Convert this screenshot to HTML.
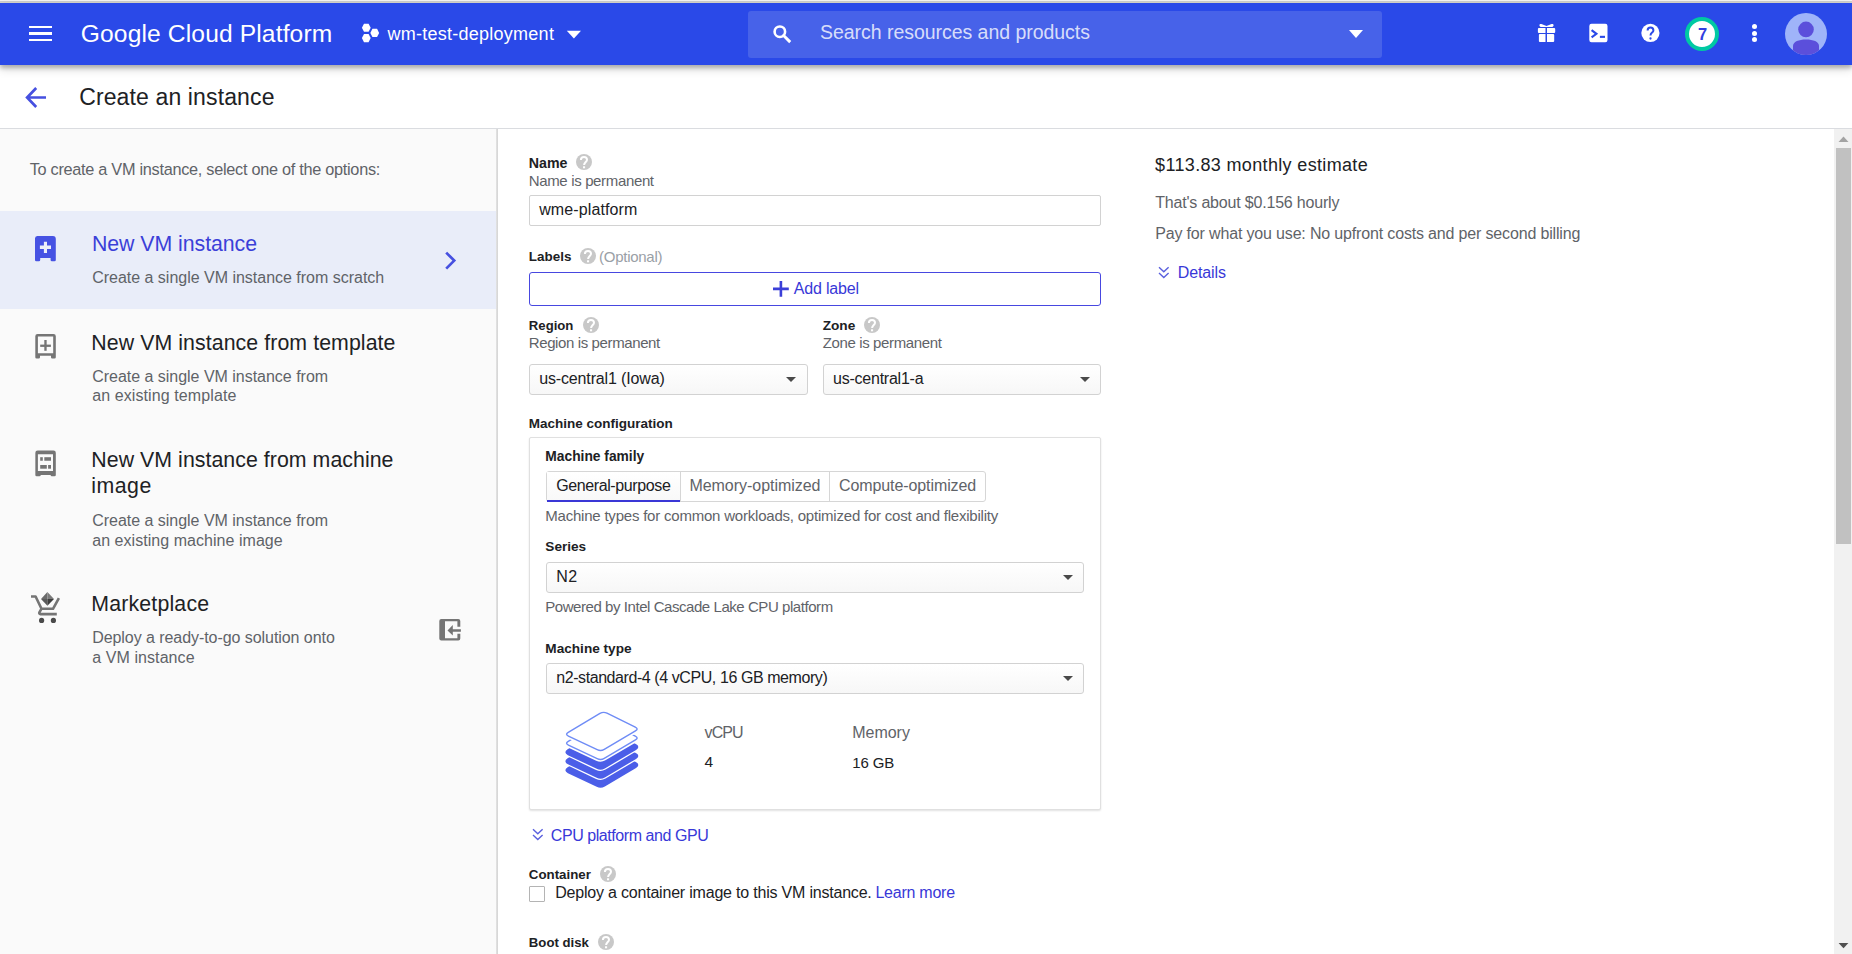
<!DOCTYPE html>
<html><head><meta charset="utf-8"><title>Create an instance</title>
<style>
html,body{margin:0;padding:0;width:1852px;height:954px;overflow:hidden;background:#fff;font-family:"Liberation Sans", sans-serif;}
.t{position:absolute;white-space:nowrap;line-height:normal;}
.a{position:absolute;box-sizing:border-box;}
</style></head><body>
<!-- top strip -->
<div class=a style="left:0;top:0;width:1852px;height:1px;background:#f4f3f0"></div><div class=a style="left:0;top:1px;width:1852px;height:1px;background:#cdcdcd"></div><div class=a style="left:0;top:2px;width:1852px;height:1px;background:#d8d6cc"></div>
<!-- header -->
<div class=a style="left:0;top:3px;width:1852px;height:62px;background:#2a49e8;box-shadow:0 3px 4px rgba(0,0,0,0.22),0 4px 9px rgba(0,0,0,0.17)"></div>
<!-- hamburger -->
<div class=a style="left:29px;top:25.8px;width:23.3px;height:2.5px;background:#fff"></div>
<div class=a style="left:29px;top:32.3px;width:23.3px;height:2.5px;background:#fff"></div>
<div class=a style="left:29px;top:38.7px;width:23.3px;height:2.5px;background:#fff"></div>
<!-- project icon -->
<svg class=a style="left:355px;top:18px" width="30" height="30" viewBox="355 18 30 30"><polygon fill="#fff" points="361.90,27.75 364.00,23.65 368.60,23.65 370.70,27.75 368.60,31.85 364.00,31.85"/><polygon fill="#fff" points="370.35,32.90 372.45,28.80 377.05,28.80 379.15,32.90 377.05,37.00 372.45,37.00"/><polygon fill="#fff" points="361.90,38.10 364.00,34.00 368.60,34.00 370.70,38.10 368.60,42.20 364.00,42.20"/></svg>
<!-- dropdown arrow -->
<svg class=a style="left:566px;top:30px" width="16" height="9" viewBox="0 0 16 9"><polygon fill="#fff" points="0.8,0.7 15,0.7 7.9,8.4"/></svg>
<!-- search box -->
<div class=a style="left:748px;top:11px;width:634px;height:47px;background:#4762e9;border-radius:3px"></div>
<svg class=a style="left:765px;top:20px" width="35" height="30" viewBox="765 20 35 30"><circle cx="779.85" cy="31.7" r="5.25" fill="none" stroke="#fff" stroke-width="2.6"/><path d="M783.6 35.6l5.6 5.5" stroke="#fff" stroke-width="2.9" stroke-linecap="square"/></svg>
<svg class=a style="left:1348px;top:29px" width="16" height="10" viewBox="0 0 16 10"><polygon fill="#fff" points="1,1 15,1 8,9"/></svg>
<!-- header right icons -->
<svg class=a style="left:1530px;top:15px" width="140" height="35" viewBox="1530 15 140 35">
  <path fill="#fff" d="M1539.4 25.3c0-1.2 1-1.6 2-1.3l5.1 1.9 5.1-1.9c1-.3 2 .1 2 1.3 0 1.2-.9 1.8-2 1.8h-10.2c-1.1 0-2-.6-2-1.8z"/>
  <rect fill="#fff" x="1537.9" y="28" width="17.3" height="5" rx="1"/>
  <rect fill="#fff" x="1538.9" y="33.9" width="15.3" height="8.1" rx="1"/>
  <rect fill="#2a49e8" x="1545.5" y="27.5" width="1.5" height="15"/>
  <rect fill="#fff" x="1589.3" y="23.7" width="18.2" height="18.5" rx="2.2"/>
  <path fill="none" stroke="#2a49e8" stroke-width="2.1" stroke-linejoin="miter" d="M1591.6 30.2l4.8 3.6-4.8 3.6"/>
  <rect fill="#2a49e8" x="1599.9" y="35.8" width="5.1" height="2.1"/>
  <circle fill="#fff" cx="1650.4" cy="32.95" r="9.1"/>
  <path fill="none" stroke="#2a49e8" stroke-width="2" d="M1647.6 30.6c0-1.8 1.2-3 2.9-3s2.9 1.2 2.9 2.8c0 2.1-2.9 2.4-2.9 5"/>
  <circle fill="#2a49e8" cx="1650.5" cy="38.5" r="1.15"/>
</svg>
<div class=a style="left:1685px;top:17px;width:34px;height:34px;border-radius:50%;background:#fff;border:4.9px solid #00c9a3"></div>
<div class=t style="left:1693px;top:25.2px;font-size:16.5px;font-weight:700;color:#3140e0;width:19px;text-align:center">7</div>
<div class=a style="left:1751.7px;top:23.8px;width:5.3px;height:5.3px;border-radius:50%;background:#fff"></div>
<div class=a style="left:1751.7px;top:30.5px;width:5.3px;height:5.3px;border-radius:50%;background:#fff"></div>
<div class=a style="left:1751.7px;top:37.2px;width:5.3px;height:5.3px;border-radius:50%;background:#fff"></div>
<svg class=a style="left:1785px;top:13px" width="42" height="42" viewBox="1785 13 42 42">
  <defs><clipPath id="avc"><circle cx="1806" cy="34" r="21"/></clipPath></defs>
  <circle cx="1806" cy="34" r="21" fill="#9fb4f9"/>
  <g clip-path="url(#avc)">
  <circle cx="1806" cy="29.4" r="7.8" fill="#5b4fdb"/>
  <path fill="#5b4fdb" d="M1793 55V46c0-4.5 5.8-6.6 13-6.6s13 2.1 13 6.6V55z"/>
  </g>
</svg>
<!-- secondary header -->
<svg class=a style="left:15px;top:78px" width="45" height="40" viewBox="15 78 45 40"><path fill="none" stroke="#4650e0" stroke-width="2.7" stroke-linejoin="miter" stroke-miterlimit="10" d="M46 97.5H28M36.2 88 27.1 97.5 36.2 107"/></svg>
<div class=a style="left:0;top:128px;width:1852px;height:1px;background:#dadce0"></div>
<!-- left panel -->
<div class=a style="left:0;top:129px;width:497px;height:825px;background:#fafafa"></div>
<div class=a style="left:0;top:211px;width:497px;height:98px;background:#e9edf9"></div>
<div class=a style="left:496px;top:129px;width:2px;height:825px;background:linear-gradient(to right,#e4e4e4,#d3d3d3)"></div>
<!-- scrollbar -->
<div class=a style="left:1834px;top:129px;width:18px;height:825px;background:#f1f1f1"></div>
<div class=a style="left:1836px;top:148px;width:15px;height:396px;background:#c1c1c1"></div>
<svg class=a style="left:1838px;top:136px" width="11" height="7" viewBox="0 0 11 7"><polygon fill="#a3a3a3" points="0.5,6 10.5,6 5.5,0.6"/></svg>
<svg class=a style="left:1838px;top:942px" width="11" height="7" viewBox="0 0 11 7"><polygon fill="#505050" points="0.6,1 10.4,1 5.5,6.2"/></svg>
<!-- left icons -->
<svg class=a style="left:34px;top:235px" width="24" height="27" viewBox="0 0 24 27"><path fill="#4652e3" d="M3.3 1h15.6a2.9 2.9 0 0 1 2.9 2.9V25a1.3 1.3 0 0 1-1.3 1.3h-2.6a1.3 1.3 0 0 1-1.3-1.3v-2H6.2v2a1.3 1.3 0 0 1-1.3 1.3H2.3A1.3 1.3 0 0 1 1 25V3.6A2.6 2.6 0 0 1 3.3 1z"/><path fill="#eef0f8" d="M9.9 6.8h3.1v3.8h4v3.4h-4v3.9H9.9v-3.9H5.9v-3.4h4z"/></svg>
<svg class=a style="left:30px;top:330px" width="30" height="32" viewBox="30 330 30 32"><path fill="#757575" fill-rule="evenodd" d="M37.6 334h15.9a2.3 2.3 0 0 1 2.3 2.3V357.2a1.3 1.3 0 0 1-1.3 1.3h-2.3a1.3 1.3 0 0 1-1.2-1.3v-1.5H40v1.5a1.3 1.3 0 0 1-1.3 1.3h-2.1a1.3 1.3 0 0 1-1.3-1.3V336.3a2.3 2.3 0 0 1 2.3-2.3zM37.9 336.6v16.7h15.3v-16.7z"/><rect fill="#757575" x="40.2" y="344.6" width="10.7" height="2.3"/><rect fill="#757575" x="44.3" y="340" width="2.35" height="10.8"/></svg>
<svg class=a style="left:30px;top:446px" width="30" height="34" viewBox="30 446 30 34"><path fill="#757575" fill-rule="evenodd" d="M37.6 450.4h15.9a2.3 2.3 0 0 1 2.3 2.3V475a1.3 1.3 0 0 1-1.3 1.3h-2.6a1.3 1.3 0 0 1-1.3-1.3v-.1H40.75v.1a1.3 1.3 0 0 1-1.3 1.3h-2.8a1.3 1.3 0 0 1-1.3-1.3V452.7a2.3 2.3 0 0 1 2.3-2.3zM37.9 454.2v16.9h15.1v-16.9z"/><rect fill="#757575" x="40.2" y="457.2" width="2.6" height="3.55"/><rect fill="#757575" x="44.3" y="457.2" width="6.7" height="3.55"/><rect fill="#757575" x="40.2" y="465" width="6.6" height="3.7"/><rect fill="#757575" x="48.1" y="465" width="2.9" height="3.7"/></svg>
<svg class=a style="left:30px;top:590px" width="32" height="34" viewBox="0 0 32 34"><path fill="none" stroke="#757575" stroke-width="2.6" stroke-linejoin="round" d="M1 6.5h4.6l5.9 12.3h11.5l5.9-10.6M11.4 18.8l-2 3.6c-.5 1 .1 1.7 1 1.7h16.4"/><circle cx="11.6" cy="30.4" r="2.6" fill="#4a4a4a"/><circle cx="23.4" cy="30.4" r="2.6" fill="#4a4a4a"/><polygon fill="#6a6a6a" points="17.4,2 11,9.1 17.4,9.1"/><polygon fill="#7a7a7a" points="17.4,2 24,9.1 17.4,9.1"/><polygon fill="#5a5a5a" points="11,9.1 17.4,15.7 17.4,9.1"/><polygon fill="#3e3e3e" points="24,9.1 17.4,15.7 17.4,9.1"/></svg>
<svg class=a style="left:438px;top:617px" width="24" height="26" viewBox="0 0 24 26"><path fill="#757575" d="M3.3 1.9h17a2 2 0 0 1 2 2v5.8h-2.9V4.2H7v17.1h12.4v-4.6h2.9v4.9a2 2 0 0 1-2 2h-17a2 2 0 0 1-2-2V3.9a2 2 0 0 1 2-2z"/><polygon fill="#757575" points="9.5,13.4 14.8,8.1 14.8,12.2 22.9,12.2 22.9,14.7 14.8,14.7 14.8,18.6"/></svg>
<svg class=a style="left:430px;top:240px" width="40" height="40" viewBox="430 240 40 40"><path fill="none" stroke="#4650e0" stroke-width="2.7" d="M446.2 252.6 454.2 260.6 446.2 268.6"/></svg>
<!-- form: Name -->
<svg class=a style="left:576.0px;top:154.0px" width="16" height="16" viewBox="-8 -8 16 16"><circle r="8" fill="#c8c8c8"/><path fill="none" stroke="#fff" stroke-width="2" d="M-3.1-1.9C-3.1-3.9-1.7-5.1 0-5.1 1.8-5.1 3-3.9 3-2.3 3-.3 .1.3 .1 3"/><rect fill="#fff" x="-1" y="4.3" width="2.1" height="2"/></svg>
<div class=a style="left:529px;top:195px;width:572px;height:31px;border:1px solid #d2d2d2;border-radius:2px;background:#fff"></div>
<svg class=a style="left:580.0px;top:248.0px" width="16" height="16" viewBox="-8 -8 16 16"><circle r="8" fill="#c8c8c8"/><path fill="none" stroke="#fff" stroke-width="2" d="M-3.1-1.9C-3.1-3.9-1.7-5.1 0-5.1 1.8-5.1 3-3.9 3-2.3 3-.3 .1.3 .1 3"/><rect fill="#fff" x="-1" y="4.3" width="2.1" height="2"/></svg>
<div class=a style="left:529px;top:272px;width:572px;height:34px;border:1.6px solid #4848e0;border-radius:3px"></div>
<svg class=a style="left:772px;top:280px" width="18" height="18" viewBox="0 0 18 18"><path fill="#3b3fd8" d="M7.6 1h2.6v6.6h6.6v2.6h-6.6v6.6H7.6v-6.6H1V7.6h6.6z"/></svg>
<svg class=a style="left:583.0px;top:317.0px" width="16" height="16" viewBox="-8 -8 16 16"><circle r="8" fill="#c8c8c8"/><path fill="none" stroke="#fff" stroke-width="2" d="M-3.1-1.9C-3.1-3.9-1.7-5.1 0-5.1 1.8-5.1 3-3.9 3-2.3 3-.3 .1.3 .1 3"/><rect fill="#fff" x="-1" y="4.3" width="2.1" height="2"/></svg>
<svg class=a style="left:864.0px;top:317.0px" width="16" height="16" viewBox="-8 -8 16 16"><circle r="8" fill="#c8c8c8"/><path fill="none" stroke="#fff" stroke-width="2" d="M-3.1-1.9C-3.1-3.9-1.7-5.1 0-5.1 1.8-5.1 3-3.9 3-2.3 3-.3 .1.3 .1 3"/><rect fill="#fff" x="-1" y="4.3" width="2.1" height="2"/></svg>
<div class=a style="left:529px;top:364px;width:279px;height:31px;border:1px solid #d2d2d2;border-radius:3px;background:linear-gradient(#fff,#f7f7f7)"></div>
<div class=a style="left:823px;top:364px;width:278px;height:31px;border:1px solid #d2d2d2;border-radius:3px;background:linear-gradient(#fff,#f7f7f7)"></div>
<svg class=a style="left:785px;top:376px" width="12" height="7" viewBox="0 0 12 7"><polygon fill="#4a4a4a" points="1,1 11,1 6,6"/></svg>
<svg class=a style="left:1079px;top:376px" width="12" height="7" viewBox="0 0 12 7"><polygon fill="#4a4a4a" points="1,1 11,1 6,6"/></svg>
<!-- machine config box -->
<div class=a style="left:529px;top:437px;width:572px;height:373px;border:1px solid #e0e0e0;border-radius:2px;background:#fff;box-shadow:0 1px 2px rgba(0,0,0,0.12)"></div>
<div class=a style="left:546px;top:471px;width:440px;height:31px;border:1px solid #d6d6d6;border-radius:3px;background:#fff"></div>
<div class=a style="left:547px;top:472px;width:133px;height:29px;background:linear-gradient(#fff,#f8f8f8)"></div>
<div class=a style="left:547px;top:499.6px;width:133px;height:2.4px;background:#3a37d6"></div>
<div class=a style="left:680px;top:471px;width:1px;height:31px;background:#d6d6d6"></div>
<div class=a style="left:829px;top:471px;width:1px;height:31px;background:#d6d6d6"></div>
<div class=a style="left:546px;top:562px;width:538px;height:31px;border:1px solid #d2d2d2;border-radius:3px;background:linear-gradient(#fff,#f7f7f7)"></div>
<svg class=a style="left:1062px;top:574px" width="12" height="7" viewBox="0 0 12 7"><polygon fill="#4a4a4a" points="1,1 11,1 6,6"/></svg>
<div class=a style="left:546px;top:663px;width:538px;height:31px;border:1px solid #d2d2d2;border-radius:3px;background:linear-gradient(#fff,#f7f7f7)"></div>
<svg class=a style="left:1062px;top:675px" width="12" height="7" viewBox="0 0 12 7"><polygon fill="#4a4a4a" points="1,1 11,1 6,6"/></svg>
<!-- stack icon -->
<svg class=a style="left:555px;top:700px" width="95" height="95" viewBox="555 700 95 95"><g stroke-linejoin="round"><path d="M599.96 749.45Q603.40 747.40 606.99 749.17L635.31 763.13Q638.90 764.90 635.46 766.93L604.24 785.37Q600.80 787.40 597.18 785.69L568.42 772.11Q564.80 770.40 568.24 768.35Z" fill="#fff" stroke="#fff" stroke-width="5"/><path d="M599.96 749.45Q603.40 747.40 606.99 749.17L635.31 763.13Q638.90 764.90 635.46 766.93L604.24 785.37Q600.80 787.40 597.18 785.69L568.42 772.11Q564.80 770.40 568.24 768.35Z" fill="#4b5ee8" stroke="#4b5ee8" stroke-width="2.4"/><path d="M599.96 740.45Q603.40 738.40 606.99 740.17L635.31 754.13Q638.90 755.90 635.46 757.93L604.24 776.37Q600.80 778.40 597.18 776.69L568.42 763.11Q564.80 761.40 568.24 759.35Z" fill="#fff" stroke="#fff" stroke-width="5"/><path d="M599.96 740.45Q603.40 738.40 606.99 740.17L635.31 754.13Q638.90 755.90 635.46 757.93L604.24 776.37Q600.80 778.40 597.18 776.69L568.42 763.11Q564.80 761.40 568.24 759.35Z" fill="#4b5ee8" stroke="#4b5ee8" stroke-width="2.4"/><path d="M599.96 731.45Q603.40 729.40 606.99 731.17L635.31 745.13Q638.90 746.90 635.46 748.93L604.24 767.37Q600.80 769.40 597.18 767.69L568.42 754.11Q564.80 752.40 568.24 750.35Z" fill="#fff" stroke="#fff" stroke-width="5"/><path d="M599.96 731.45Q603.40 729.40 606.99 731.17L635.31 745.13Q638.90 746.90 635.46 748.93L604.24 767.37Q600.80 769.40 597.18 767.69L568.42 754.11Q564.80 752.40 568.24 750.35Z" fill="#4b5ee8" stroke="#4b5ee8" stroke-width="2.4"/><path d="M599.96 722.45Q603.40 720.40 606.99 722.17L635.31 736.13Q638.90 737.90 635.46 739.93L604.24 758.37Q600.80 760.40 597.18 758.69L568.42 745.11Q564.80 743.40 568.24 741.35Z" fill="#fff" stroke="#fff" stroke-width="4.6"/><path d="M599.96 722.45Q603.40 720.40 606.99 722.17L635.31 736.13Q638.90 737.90 635.46 739.93L604.24 758.37Q600.80 760.40 597.18 758.69L568.42 745.11Q564.80 743.40 568.24 741.35Z" fill="#fff" stroke="#6f8cf6" stroke-width="1.4"/><path d="M599.96 713.45Q603.40 711.40 606.99 713.17L635.31 727.13Q638.90 728.90 635.46 730.93L604.24 749.37Q600.80 751.40 597.18 749.69L568.42 736.11Q564.80 734.40 568.24 732.35Z" fill="#fff" stroke="#fff" stroke-width="4.6"/><path d="M599.96 713.45Q603.40 711.40 606.99 713.17L635.31 727.13Q638.90 728.90 635.46 730.93L604.24 749.37Q600.80 751.40 597.18 749.69L568.42 736.11Q564.80 734.40 568.24 732.35Z" fill="#fff" stroke="#6f8cf6" stroke-width="1.4"/></g></svg>
<!-- cpu platform chevrons -->
<svg class=a style="left:530px;top:826px" width="16" height="18" viewBox="0 0 16 18"><path fill="none" stroke="#5a60de" stroke-width="1.4" d="M3 3.2l4.8 4.6 4.8-4.6M3 9l4.8 4.6 4.8-4.6"/></svg>
<svg class=a style="left:1156px;top:264px" width="16" height="18" viewBox="0 0 16 18"><path fill="none" stroke="#5a60de" stroke-width="1.4" d="M3 3.2l4.8 4.6 4.8-4.6M3 9l4.8 4.6 4.8-4.6"/></svg>
<svg class=a style="left:600.0px;top:866.0px" width="16" height="16" viewBox="-8 -8 16 16"><circle r="8" fill="#c8c8c8"/><path fill="none" stroke="#fff" stroke-width="2" d="M-3.1-1.9C-3.1-3.9-1.7-5.1 0-5.1 1.8-5.1 3-3.9 3-2.3 3-.3 .1.3 .1 3"/><rect fill="#fff" x="-1" y="4.3" width="2.1" height="2"/></svg>
<div class=a style="left:529px;top:886px;width:16px;height:16px;border:1px solid #b4b4b4;border-radius:1px;background:#fff"></div>
<svg class=a style="left:598.0px;top:934.0px" width="16" height="16" viewBox="-8 -8 16 16"><circle r="8" fill="#c8c8c8"/><path fill="none" stroke="#fff" stroke-width="2" d="M-3.1-1.9C-3.1-3.9-1.7-5.1 0-5.1 1.8-5.1 3-3.9 3-2.3 3-.3 .1.3 .1 3"/><rect fill="#fff" x="-1" y="4.3" width="2.1" height="2"/></svg>

<div class=t style="left:80.77px;top:20.14px;font-size:24.60px;color:#fff;font-weight:400;letter-spacing:0.133px;">Google Cloud Platform</div>
<div class=t style="left:387.50px;top:23.71px;font-size:18.00px;color:#fff;font-weight:400;letter-spacing:0.255px;">wm-test-deployment</div>
<div class=t style="left:820.02px;top:21.25px;font-size:19.50px;color:rgba(255,255,255,0.80);font-weight:400;letter-spacing:-0.037px;">Search resources and products</div>
<div class=t style="left:79.15px;top:84.48px;font-size:23.00px;color:#202124;font-weight:400;letter-spacing:0.131px;">Create an instance</div>
<div class=t style="left:29.68px;top:160.45px;font-size:16.30px;color:#5f6368;font-weight:400;letter-spacing:-0.282px;">To create a VM instance, select one of the options:</div>
<div class=t style="left:91.94px;top:232.22px;font-size:21.30px;color:#3b3fd8;font-weight:400;letter-spacing:-0.042px;">New VM instance</div>
<div class=t style="left:92.20px;top:269.32px;font-size:16.00px;color:#5f6368;font-weight:400;letter-spacing:-0.014px;">Create a single VM instance from scratch</div>
<div class=t style="left:91.34px;top:330.52px;font-size:21.30px;color:#202124;font-weight:400;letter-spacing:0.082px;">New VM instance from template</div>
<div class=t style="left:92.20px;top:367.62px;font-size:16.00px;color:#5f6368;font-weight:400;letter-spacing:-0.021px;">Create a single VM instance from</div>
<div class=t style="left:92.20px;top:387.12px;font-size:16.00px;color:#5f6368;font-weight:400;letter-spacing:0.099px;">an existing template</div>
<div class=t style="left:91.34px;top:448.12px;font-size:21.30px;color:#202124;font-weight:400;letter-spacing:0.055px;">New VM instance from machine</div>
<div class=t style="left:91.34px;top:474.02px;font-size:21.30px;color:#202124;font-weight:400;letter-spacing:0.479px;">image</div>
<div class=t style="left:92.20px;top:511.62px;font-size:16.00px;color:#5f6368;font-weight:400;letter-spacing:-0.021px;">Create a single VM instance from</div>
<div class=t style="left:92.20px;top:531.62px;font-size:16.00px;color:#5f6368;font-weight:400;letter-spacing:0.044px;">an existing machine image</div>
<div class=t style="left:91.34px;top:592.32px;font-size:21.30px;color:#202124;font-weight:400;letter-spacing:0.173px;">Marketplace</div>
<div class=t style="left:92.20px;top:629.42px;font-size:16.00px;color:#5f6368;font-weight:400;letter-spacing:-0.060px;">Deploy a ready-to-go solution onto</div>
<div class=t style="left:92.20px;top:649.32px;font-size:16.00px;color:#5f6368;font-weight:400;letter-spacing:0.084px;">a VM instance</div>
<div class=t style="left:528.79px;top:154.66px;font-size:14.19px;color:#202124;font-weight:700;letter-spacing:0.000px;">Name</div>
<div class=t style="left:528.75px;top:171.62px;font-size:15.00px;color:#5f6368;font-weight:400;letter-spacing:-0.350px;">Name is permanent</div>
<div class=t style="left:539.20px;top:200.92px;font-size:16.00px;color:#202124;font-weight:400;letter-spacing:0.118px;">wme-platform</div>
<div class=t style="left:528.83px;top:249.04px;font-size:13.44px;color:#202124;font-weight:700;letter-spacing:0.000px;">Labels</div>
<div class=t style="left:599.05px;top:247.62px;font-size:15.00px;color:#9aa0a6;font-weight:400;letter-spacing:-0.273px;">(Optional)</div>
<div class=t style="left:793.80px;top:279.52px;font-size:16.00px;color:#3838d8;font-weight:400;letter-spacing:-0.190px;">Add label</div>
<div class=t style="left:528.84px;top:318.00px;font-size:13.15px;color:#202124;font-weight:700;letter-spacing:0.000px;">Region</div>
<div class=t style="left:528.75px;top:334.03px;font-size:15.00px;color:#5f6368;font-weight:400;letter-spacing:-0.385px;">Region is permanent</div>
<div class=t style="left:539.20px;top:369.92px;font-size:16.00px;color:#202124;font-weight:400;letter-spacing:-0.144px;">us-central1 (Iowa)</div>
<div class=t style="left:822.72px;top:317.55px;font-size:13.64px;color:#202124;font-weight:700;letter-spacing:0.000px;">Zone</div>
<div class=t style="left:822.65px;top:334.03px;font-size:15.00px;color:#5f6368;font-weight:400;letter-spacing:-0.361px;">Zone is permanent</div>
<div class=t style="left:833.00px;top:369.92px;font-size:16.00px;color:#202124;font-weight:400;letter-spacing:-0.231px;">us-central1-a</div>
<div class=t style="left:528.83px;top:416.28px;font-size:13.50px;color:#202124;font-weight:700;letter-spacing:0.000px;">Machine configuration</div>
<div class=t style="left:545.31px;top:448.81px;font-size:13.80px;color:#202124;font-weight:700;letter-spacing:0.000px;">Machine family</div>
<div class=t style="left:556.20px;top:476.52px;font-size:16.00px;color:#202124;font-weight:400;letter-spacing:-0.391px;">General-purpose</div>
<div class=t style="left:689.40px;top:476.52px;font-size:16.00px;color:#5f6368;font-weight:400;letter-spacing:-0.033px;">Memory-optimized</div>
<div class=t style="left:839.00px;top:476.52px;font-size:16.00px;color:#5f6368;font-weight:400;letter-spacing:-0.096px;">Compute-optimized</div>
<div class=t style="left:545.25px;top:506.93px;font-size:15.00px;color:#5f6368;font-weight:400;letter-spacing:-0.212px;">Machine types for common workloads, optimized for cost and flexibility</div>
<div class=t style="left:545.32px;top:539.28px;font-size:13.62px;color:#202124;font-weight:700;letter-spacing:0.000px;">Series</div>
<div class=t style="left:556.20px;top:568.32px;font-size:16.00px;color:#202124;font-weight:400;letter-spacing:0.447px;">N2</div>
<div class=t style="left:545.25px;top:598.42px;font-size:15.00px;color:#5f6368;font-weight:400;letter-spacing:-0.441px;">Powered by Intel Cascade Lake CPU platform</div>
<div class=t style="left:545.32px;top:641.47px;font-size:13.62px;color:#202124;font-weight:700;letter-spacing:0.000px;">Machine type</div>
<div class=t style="left:556.20px;top:668.82px;font-size:16.00px;color:#202124;font-weight:400;letter-spacing:-0.421px;">n2-standard-4 (4 vCPU, 16 GB memory)</div>
<div class=t style="left:704.60px;top:723.52px;font-size:16.00px;color:#5f6368;font-weight:400;letter-spacing:-0.927px;">vCPU</div>
<div class=t style="left:704.62px;top:753.47px;font-size:15.50px;color:#202124;font-weight:400;letter-spacing:0.000px;">4</div>
<div class=t style="left:852.30px;top:723.52px;font-size:16.00px;color:#5f6368;font-weight:400;letter-spacing:-0.036px;">Memory</div>
<div class=t style="left:852.35px;top:753.92px;font-size:15.00px;color:#202124;font-weight:400;letter-spacing:-0.183px;">16 GB</div>
<div class=t style="left:550.80px;top:826.72px;font-size:16.00px;color:#3838d8;font-weight:400;letter-spacing:-0.436px;">CPU platform and GPU</div>
<div class=t style="left:528.84px;top:866.86px;font-size:13.30px;color:#202124;font-weight:700;letter-spacing:0.000px;">Container</div>
<div class=t style="left:555.20px;top:883.72px;font-size:16.00px;color:#202124;font-weight:400;letter-spacing:-0.202px;">Deploy a container image to this VM instance.</div>
<div class=t style="left:875.40px;top:883.72px;font-size:16.00px;color:#3838d8;font-weight:400;letter-spacing:-0.236px;">Learn more</div>
<div class=t style="left:528.84px;top:934.87px;font-size:13.18px;color:#202124;font-weight:700;letter-spacing:0.000px;">Boot disk</div>
<div class=t style="left:1155.10px;top:154.71px;font-size:18.00px;color:#202124;font-weight:400;letter-spacing:0.339px;">$113.83 monthly estimate</div>
<div class=t style="left:1155.20px;top:193.82px;font-size:16.00px;color:#5f6368;font-weight:400;letter-spacing:-0.187px;">That's about $0.156 hourly</div>
<div class=t style="left:1155.20px;top:224.92px;font-size:16.00px;color:#5f6368;font-weight:400;letter-spacing:-0.162px;">Pay for what you use: No upfront costs and per second billing</div>
<div class=t style="left:1177.70px;top:264.32px;font-size:16.00px;color:#3838d8;font-weight:400;letter-spacing:-0.101px;">Details</div>
</body></html>
